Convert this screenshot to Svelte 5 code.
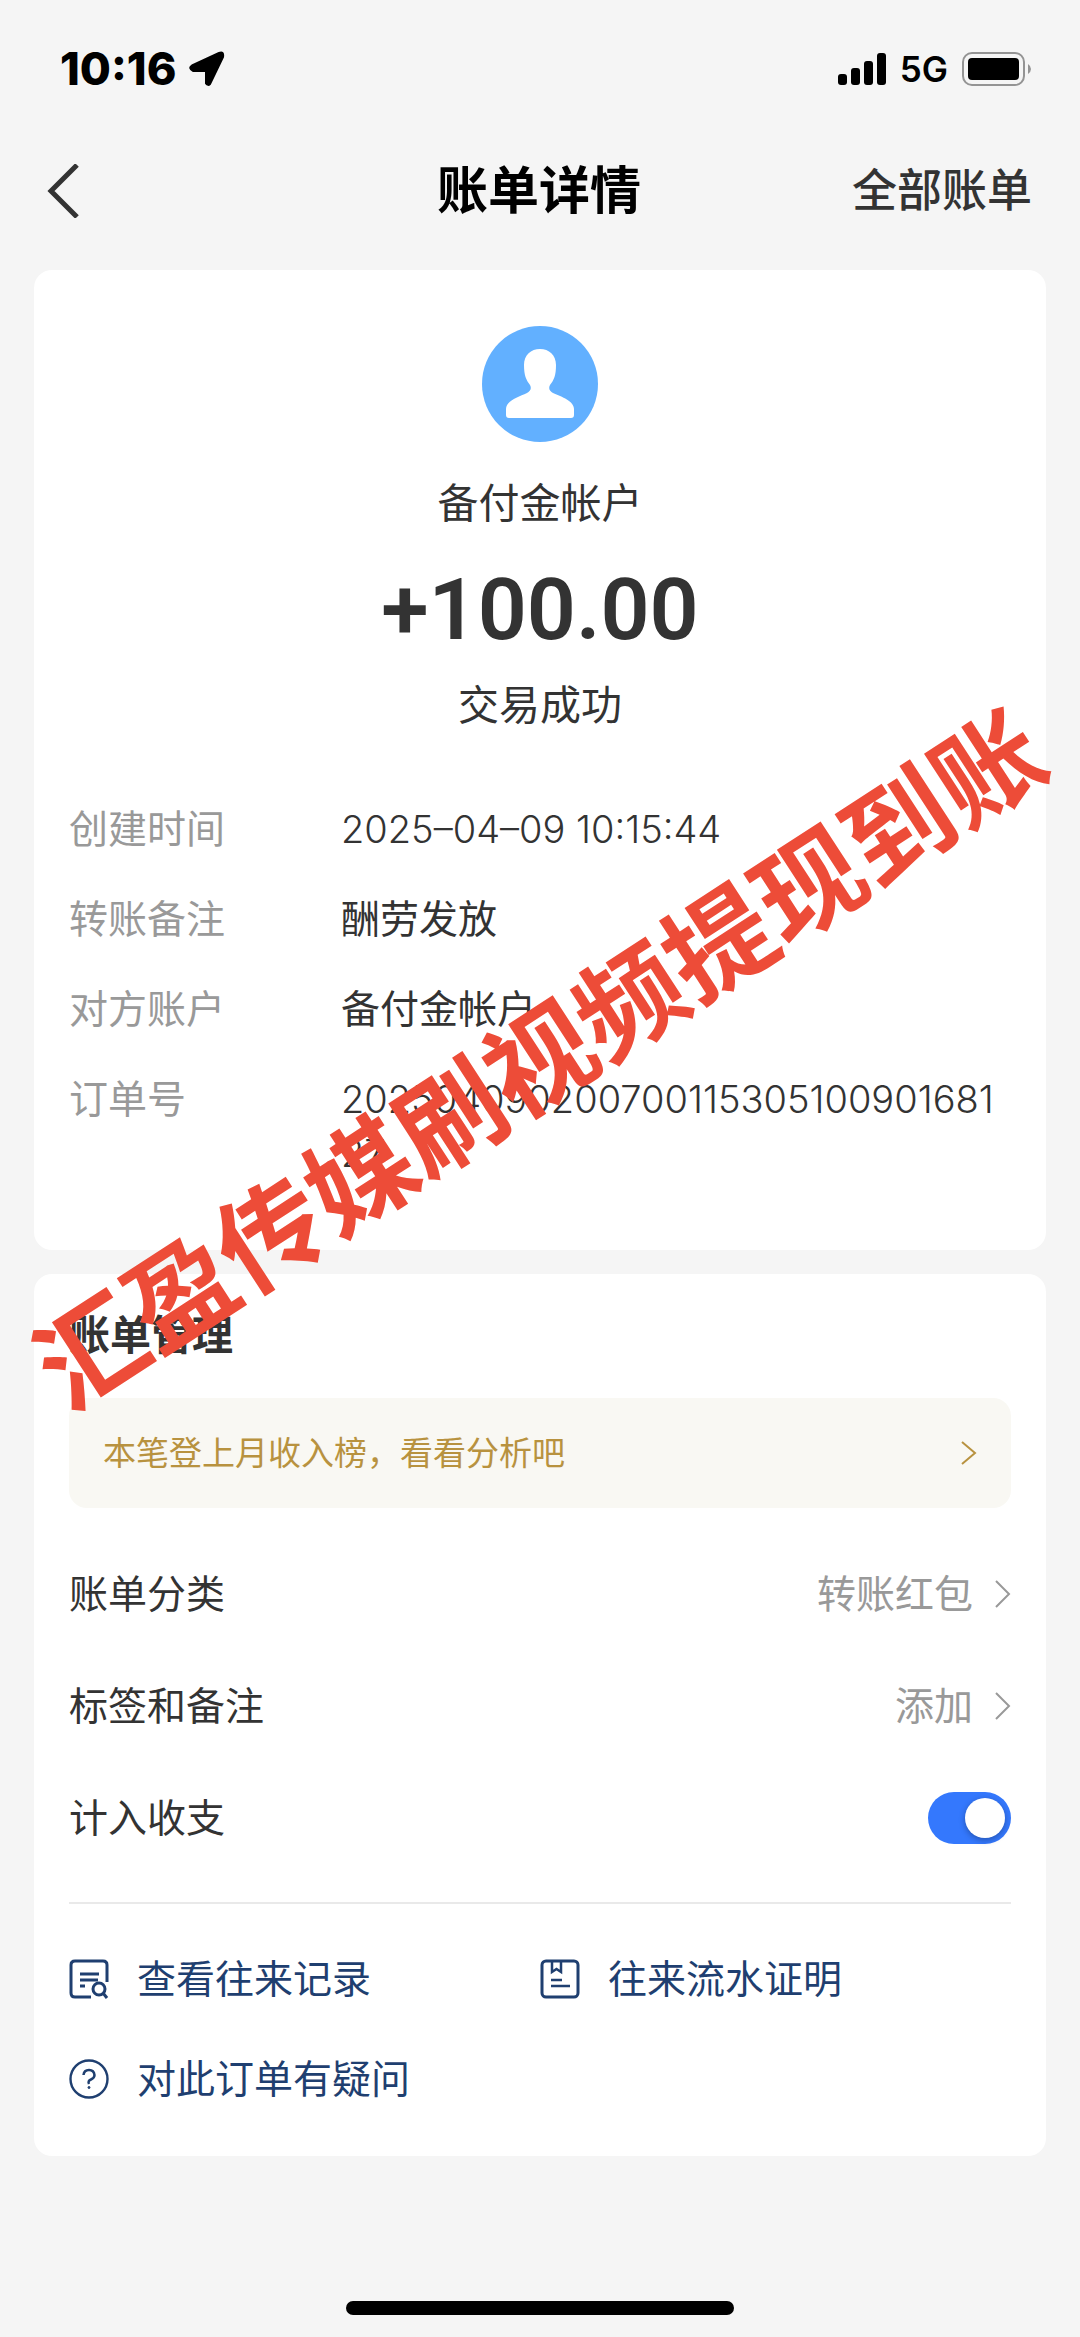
<script>
  let counted = true;

  const details = [
    { label: '创建时间', value: '2025–04–09 10:15:44', number: true },
    { label: '转账备注', value: '酬劳发放' },
    { label: '对方账户', value: '备付金帐户' },
    { label: '订单号', value: '20250409020070011530510090168127', number: true }
  ];

  const settings = [
    { label: '账单分类', value: '转账红包' },
    { label: '标签和备注', value: '添加' }
  ];

  const links = [
    { icon: 'record', text: '查看往来记录' },
    { icon: 'proof', text: '往来流水证明' },
    { icon: 'question', text: '对此订单有疑问' }
  ];
</script>

<div class="page">
  <div class="status">
    <div class="clock">
      <span>10:16</span>
      <svg width="36" height="36" viewBox="0 0 36 36">
        <path d="M3 14.500 30 2Q35 0 34 6L21 33Q19 35 17 32.500V20H4Q-1 17 3 14.500Z" stroke="#000" stroke-width="2" stroke-linejoin="round" />
      </svg>
    </div>
    <div class="signal">
      <svg width="48" height="32" viewBox="0 0 48 32">
        <rect x="0" y="21" width="9" height="11" rx="3" />
        <rect x="13" y="15" width="9" height="17" rx="3" />
        <rect x="26" y="8" width="9" height="24" rx="3" />
        <rect x="39" y="0" width="9" height="32" rx="3" />
      </svg>
      <span>5G</span>
      <svg width="70" height="34" viewBox="0 0 70 34">
        <rect x="1" y="1" width="61" height="32" rx="9" fill="none" stroke="#949494" stroke-width="2" />
        <rect x="6" y="6" width="51" height="22" rx="4" />
        <path d="M66 12Q69 14 69 17T66 22Z" fill="#949494" />
      </svg>
    </div>
  </div>

  <header>
    <button class="back" aria-label="返回">
      <svg width="34" height="54" viewBox="0 0 34 54">
        <path d="M31 1 5 27 31 53" fill="none" stroke="#333" stroke-width="5" />
      </svg>
    </button>
    <h1>账单详情</h1>
    <a class="all" href="#all">全部账单</a>
  </header>

  <main>
    <section class="card">
      <div class="summary">
        <svg class="avatar" width="116" height="116" viewBox="0 0 116 116">
          <circle cx="58" cy="58" r="58" fill="#62b0ff" />
          <path d="M58 23C67 23 74 29 74 39C74 49 72 54 68 59C66 63 68 65 71 67C80 71 92 75 92 83V89Q92 92 89 92H27Q24 92 24 89V83C24 75 36 71 45 67C48 65 50 63 48 59C44 54 42 49 42 39C42 29 49 23 58 23Z" fill="#fff" />
        </svg>
        <p class="name">备付金帐户</p>
        <p class="amount">+100.00</p>
        <p class="state">交易成功</p>
      </div>
      <dl>
        {#each details as item}
          <dt>{item.label}</dt>
          <dd class:number={item.number}>{item.value}</dd>
        {/each}
      </dl>
    </section>

    <section class="card manage">
      <h2>账单管理</h2>
      <a class="banner" href="#rank">
        <span>本笔登上月收入榜，看看分析吧</span>
        <svg width="16" height="24" viewBox="0 0 16 24">
          <path d="M1 1 14 12 1 23" fill="none" stroke="#b8923f" stroke-width="2" />
        </svg>
      </a>
      {#each settings as item}
        <button class="row">
          <span>{item.label}</span>
          <span class="value">
            {item.value}
            <svg width="16" height="28" viewBox="0 0 16 28">
              <path d="M1 1 14 14 1 27" fill="none" stroke="#999" stroke-width="2" />
            </svg>
          </span>
        </button>
      {/each}
      <label class="row">
        <span>计入收支</span>
        <input type="checkbox" bind:checked={counted} />
      </label>
      <div class="links">
        {#each links as item}
          <a href="#{item.icon}">
            <svg width="40" height="40" viewBox="0 0 40 40" fill="none" stroke="#1f3f70" stroke-width="3">
              {#if item.icon == 'record'}
                <path d="M22 38H6Q2 38 2 34V6Q2 2 6 2H34Q38 2 38 6V23" />
                <path d="M11 15H30M11 21H29M11 27H16" />
                <circle cx="30" cy="30" r="6" />
                <path d="M34 34 38 39" />
              {:else if item.icon == 'proof'}
                <rect x="2" y="2" width="36" height="36" rx="4" />
                <path d="M12 2V13L16.500 10 21 13V2M11 21H22M11 27H30" stroke-width="2.500" />
              {:else}
                <circle cx="20" cy="20" r="18.500" stroke-width="2.400" />
                <path d="M14.500 16Q15 11 20 11T25.500 16Q25.500 19 22 20.500T20 25" stroke-width="2.500" />
                <circle cx="20" cy="28.500" r="1" fill="#1f3f70" stroke-width="1" />
              {/if}
            </svg>
            {item.text}
          </a>
        {/each}
      </div>
    </section>
  </main>

  <div class="home"></div>
  <div class="stamp">汇盈传媒刷视频提现到账</div>
</div>

<style>
  :global(body) {
    background: #f5f5f5;
  }
  .page {
    position: relative;
    display: flex;
    flex-direction: column;
    min-height: 100vh;
    box-sizing: border-box;
    overflow: hidden;
    color: #333;
    font-family: Inter, "Noto Sans CJK SC", sans-serif;
    font-size: 39px;
    line-height: 54px;
  }
  p, h1, h2, dl, dd {
    margin: 0;
  }
  svg {
    display: block;
    flex: none;
  }
  a {
    color: inherit;
    text-decoration: none;
  }
  button {
    border: 0;
    padding: 0;
    background: none;
    color: inherit;
    font: inherit;
    cursor: pointer;
  }
  .status {
    display: flex;
    justify-content: space-between;
    align-items: center;
    padding: 42px 48px 0 60px;
    color: #000;
  }
  .clock, .signal {
    display: flex;
    align-items: center;
  }
  .clock {
    gap: 12px;
    font-size: 45px;
    font-weight: 800;
  }
  .signal {
    gap: 14px;
    font-size: 35px;
    font-weight: 600;
  }
  header {
    display: grid;
    grid-template-columns: 1fr auto 1fr;
    align-items: center;
    height: 110px;
    padding: 40px 48px 24px 46px;
  }
  h1 {
    color: #000;
    font-size: 51px;
    font-weight: 700;
  }
  .all {
    justify-self: end;
    font-size: 45px;
    font-weight: 500;
  }
  main {
    display: flex;
    flex-direction: column;
    gap: 24px;
    padding: 0 34px;
  }
  .card {
    padding: 56px 35px 70px;
    border-radius: 18px;
    background: #fff;
  }
  .summary {
    display: flex;
    flex-direction: column;
    align-items: center;
    text-align: center;
  }
  .name {
    margin-top: 34px;
    font-size: 41px;
  }
  .amount {
    margin: 36px 0 24px;
    font-family: Roboto, sans-serif;
    font-size: 86px;
    font-weight: 600;
    line-height: 88px;
  }
  .state {
    font-size: 41px;
  }
  dl {
    display: grid;
    grid-template-columns: 272px 1fr;
    row-gap: 36px;
    margin-top: 70px;
  }
  dt {
    color: #999;
  }
  dd {
    word-break: break-all;
  }
  .number {
    font-size: 38px;
    font-weight: 350;
  }
  .manage {
    padding-top: 34px;
    padding-bottom: 50px;
  }
  h2 {
    font-size: 41px;
    font-weight: 700;
  }
  .banner {
    display: flex;
    justify-content: space-between;
    align-items: center;
    margin: 36px 0 30px;
    padding: 28px 34px;
    border-radius: 18px;
    background: #f9f8f3;
    color: #b8923f;
    font-size: 33px;
  }
  .row {
    display: flex;
    justify-content: space-between;
    align-items: center;
    width: 100%;
    height: 112px;
  }
  .value {
    display: flex;
    align-items: center;
    gap: 22px;
    color: #999;
  }
  input {
    appearance: none;
    width: 83px;
    height: 52px;
    margin: 0;
    padding: 6px;
    box-sizing: border-box;
    border-radius: 26px;
    background: #ddd;
    cursor: pointer;
  }
  input::before {
    content: "";
    display: block;
    width: 40px;
    height: 40px;
    border-radius: 50%;
    background: #fff;
    box-shadow: 0 2px 6px rgba(0, 0, 0, 0.3);
  }
  input:checked {
    background: #3478fd;
  }
  input:checked::before {
    margin-left: auto;
  }
  .links {
    display: grid;
    grid-template-columns: 1fr 1fr;
    row-gap: 46px;
    margin-top: 28px;
    padding-top: 48px;
    border-top: 2px solid #e9e9e9;
    color: #1f3f70;
  }
  .links a {
    display: flex;
    align-items: center;
    gap: 28px;
  }
  .home {
    align-self: center;
    width: 36%;
    height: 14px;
    margin-top: auto;
    margin-bottom: 22px;
    border-radius: 7px;
    background: #000;
  }
  .stamp {
    position: absolute;
    top: 1060px;
    left: 50%;
    color: #ed4c38;
    font-size: 107px;
    font-weight: 700;
    line-height: 120px;
    white-space: nowrap;
    transform: translate(-50%, -50%) rotate(-33deg);
    pointer-events: none;
  }
</style>
